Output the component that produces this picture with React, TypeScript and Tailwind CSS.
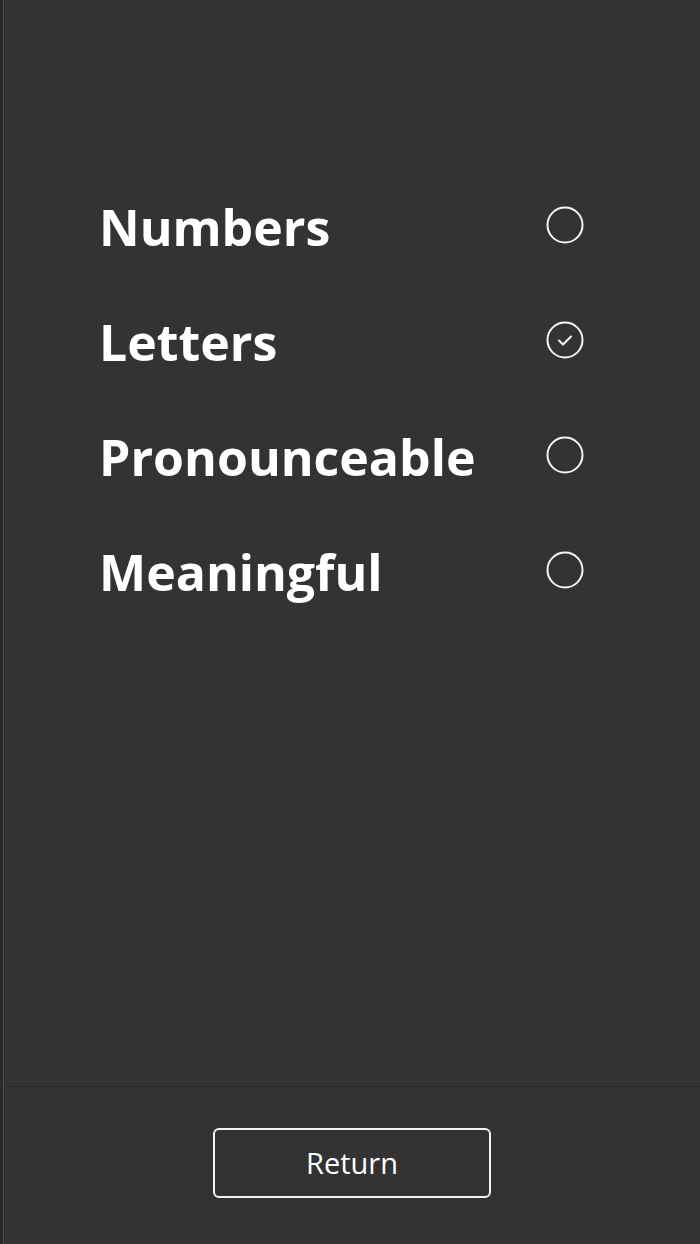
import React, { useState } from 'react';

const options = ['Numbers', 'Letters', 'Pronounceable', 'Meaningful'];

function RadioCircle({ checked }: { checked: boolean }) {
  return (
    <svg width="38" height="38" viewBox="0 0 38 38" fill="none" className="-mt-[5px]">
      <circle cx="19" cy="19" r="17.5" stroke="#f5f5f5" strokeWidth="2" />
      {checked && (
        <path d="M13 19.5l4 4 8-8" stroke="#f5f5f5" strokeWidth="2" strokeLinecap="round" strokeLinejoin="round" />
      )}
    </svg>
  );
}

export default function App() {
  const [selected, setSelected] = useState('Letters');

  return (
    <div className="flex w-[700px] h-[1244px] bg-[#333333] font-['Open_Sans',sans-serif] overflow-hidden">
      <div className="w-[3px] bg-[#2a2a2a]" />
      <div className="w-px bg-[#4a4a4a]" />
      <div className="flex-1 flex flex-col">
        <div className="flex-1 pt-[170px] pl-[95px] pr-[116px]">
          {options.map((opt) => (
            <button
              key={opt}
              onClick={() => setSelected(opt)}
              className="w-full h-[115px] flex items-center justify-between text-left"
            >
              <span className="text-[50px] font-bold text-white">{opt}</span>
              <RadioCircle checked={selected === opt} />
            </button>
          ))}
        </div>
        <div className="h-[158px] border-t border-[#282828] flex items-start justify-center pt-[41px]">
          <button className="w-[278px] h-[70px] border-2 border-[#f2f2f2] rounded-[6px] text-[29px] text-white">
            Return
          </button>
        </div>
      </div>
    </div>
  );
}
